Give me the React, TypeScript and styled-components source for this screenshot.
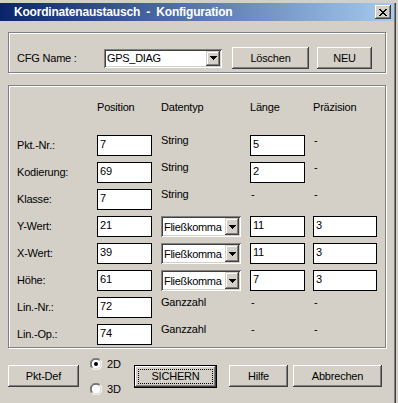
import React from 'react';
import styled, { createGlobalStyle, css } from 'styled-components';

const GlobalStyle = createGlobalStyle`
  html, body {
    margin: 0;
    padding: 0;
    background: #d4d0c8;
  }
  body {
    font-family: "Liberation Sans", Arial, sans-serif;
    font-size: 11px;
    letter-spacing: -0.2px;
    color: #000;
  }
  * {
    box-sizing: border-box;
  }
`;

const raised = css`
  background: #d4d0c8;
  box-shadow: inset -1px -1px #404040, inset 1px 1px #fff, inset -2px -2px #808080, inset 2px 2px #d4d0c8;
`;

const sunken = css`
  box-shadow: inset 1px 1px #808080, inset -1px -1px #fff, inset 2px 2px #404040, inset -2px -2px #d4d0c8;
`;

const Screen = styled.div`
  width: 398px;
  height: 403px;
  overflow: hidden;
  padding-top: 3px;
  background: #d4d0c8;
`;

const Window = styled.div`
  width: 395px;
  height: 400px;
  border-right: 1px solid #808080;
  box-shadow: 1px 0 0 #404040;
`;

const TitleBar = styled.div`
  height: 18px;
  display: flex;
  align-items: center;
  padding: 0 3px 0 14px;
  background: linear-gradient(to right, #0a246a, #a6caf0);
`;

const TitleText = styled.span`
  color: #fff;
  font-weight: bold;
  font-size: 12px;
  letter-spacing: -0.2px;
  white-space: pre;
`;

const CloseButton = styled.div`
  ${raised};
  margin-left: auto;
  width: 16px;
  height: 14px;
  display: flex;
  align-items: center;
  justify-content: center;
`;

const Body = styled.div`
  padding: 11px 8px 0 8px;
`;

const Group = styled.div<{ $height: number }>`
  height: ${p => p.$height}px;
  border: 1px solid #808080;
  box-shadow: 1px 1px 0 #fff, inset 1px 1px 0 #fff;
`;

const NameGroup = styled(Group)`
  display: flex;
  align-items: flex-start;
  padding: 14px 0 0 8px;
`;

const NameRow = styled.div`
  height: 22px;
  display: flex;
  align-items: center;
`;

const NameLabel = styled.div`
  width: 87px;
`;

const FieldGroup = styled(Group)`
  margin-top: 12px;
  padding: 15px 0 0 8px;
`;

const columns = css`
  display: grid;
  grid-template-columns: 80px 64px 89px 63px 64px;
`;

const HeaderRow = styled.div`
  ${columns};
  height: 13px;
  line-height: 13px;
  margin-bottom: 21px;
`;

const FieldGrid = styled.div`
  ${columns};
  grid-auto-rows: 21px;
  row-gap: 6px;
`;

const Label = styled.div`
  align-self: center;
  line-height: 13px;
`;

const StaticText = styled.div<{ $indent?: number }>`
  align-self: start;
  margin-top: -1px;
  line-height: 13px;
  padding-left: ${p => p.$indent ?? 0}px;
`;

const Field = styled.div<{ $width: number }>`
  width: ${p => p.$width}px;
  height: 21px;
  border: 1px solid #000;
  background: #fff;
  padding: 2px 0 0 2px;
  line-height: 13px;
`;

const Combo = styled.div<{ $width: number; $height: number }>`
  ${sunken};
  width: ${p => p.$width}px;
  height: ${p => p.$height}px;
  background: #fff;
  display: flex;
  align-items: center;
  padding: 2px 2px 2px 3px;
`;

const ComboText = styled.span`
  flex: 1;
  white-space: nowrap;
  overflow: hidden;
  letter-spacing: -0.3px;
`;

const ComboButton = styled.div`
  flex: none;
  background: #d4d0c8;
  box-shadow: inset -1px -1px #404040, inset 1px 1px #d4d0c8, inset -2px -2px #808080, inset 2px 2px #fff;
  width: 14px;
  height: 100%;
  display: flex;
  align-items: center;
  justify-content: center;
`;

const Button = styled.div<{ $width: number; $gap?: number }>`
  ${raised};
  width: ${p => p.$width}px;
  height: 22px;
  margin-left: ${p => p.$gap ?? 0}px;
  display: flex;
  align-items: center;
  justify-content: center;
`;

const DefaultButton = styled.div`
  width: 83px;
  height: 23px;
  border: 1px solid #000;
  display: flex;
`;

const DefaultFace = styled.div`
  ${raised};
  flex: 1;
  padding: 3px;
  display: flex;
`;

const FocusRing = styled.div`
  flex: 1;
  border: 1px dotted #000;
  display: flex;
  align-items: center;
  justify-content: center;
`;

const BottomRow = styled.div`
  margin-top: 9px;
  height: 38px;
  display: flex;
  align-items: center;
`;

const RadioColumn = styled.div`
  width: 44px;
  margin-left: 11px;
  display: flex;
  flex-direction: column;
  gap: 12px;
`;

const RadioRow = styled.div`
  height: 13px;
  display: flex;
  align-items: center;
  gap: 5px;
`;

function Arrow() {
  return (
    <svg width="7" height="4" viewBox="0 0 7 4" shapeRendering="crispEdges">
      <rect x="0" y="0" width="7" height="1" fill="#000" />
      <rect x="1" y="1" width="5" height="1" fill="#000" />
      <rect x="2" y="2" width="3" height="1" fill="#000" />
      <rect x="3" y="3" width="1" height="1" fill="#000" />
    </svg>
  );
}

function CloseGlyph() {
  return (
    <svg width="8" height="7" viewBox="0 0 8 7" shapeRendering="crispEdges">
      {[0, 1, 2, 3, 4, 5, 6].map(i => (
        <React.Fragment key={i}>
          <rect x={i} y={i} width="2" height="1" fill="#000" />
          <rect x={6 - i} y={i} width="2" height="1" fill="#000" />
        </React.Fragment>
      ))}
    </svg>
  );
}

function Radio({ checked }: { checked?: boolean }) {
  return (
    <svg width="12" height="12" viewBox="0 0 12 12">
      <circle cx="6" cy="6" r="5.5" fill="#fff" />
      <path d="M10.2 1.8 A5.5 5.5 0 0 0 1.8 10.2" fill="none" stroke="#808080" strokeWidth="1" />
      <path d="M1.8 10.2 A5.5 5.5 0 0 0 10.2 1.8" fill="none" stroke="#fff" strokeWidth="1" />
      <path d="M9.5 2.5 A4.5 4.5 0 0 0 2.5 9.5" fill="none" stroke="#404040" strokeWidth="1" />
      <path d="M2.5 9.5 A4.5 4.5 0 0 0 9.5 2.5" fill="none" stroke="#d4d0c8" strokeWidth="1" />
      {checked && <circle cx="6" cy="6" r="2" fill="#000" />}
    </svg>
  );
}

interface Row {
  label: string;
  position: string;
  type: string;
  length?: string;
  precision?: string;
}

const rows: Row[] = [
  { label: 'Pkt.-Nr.:', position: '7', type: 'String', length: '5' },
  { label: 'Kodierung:', position: '69', type: 'String', length: '2' },
  { label: 'Klasse:', position: '7', type: 'String' },
  { label: 'Y-Wert:', position: '21', type: 'Fließkomma', length: '11', precision: '3' },
  { label: 'X-Wert:', position: '39', type: 'Fließkomma', length: '11', precision: '3' },
  { label: 'Höhe:', position: '61', type: 'Fließkomma', length: '7', precision: '3' },
  { label: 'Lin.-Nr.:', position: '72', type: 'Ganzzahl' },
  { label: 'Lin.-Op.:', position: '74', type: 'Ganzzahl' },
];

export default function App() {
  return (
    <Screen>
      <GlobalStyle />
      <Window>
        <TitleBar>
          <TitleText>Koordinatenaustausch  -  Konfiguration</TitleText>
          <CloseButton>
            <CloseGlyph />
          </CloseButton>
        </TitleBar>
        <Body>
          <NameGroup $height={41}>
            <NameRow>
              <NameLabel>CFG Name :</NameLabel>
              <Combo $width={118} $height={19}>
                <ComboText>GPS_DIAG</ComboText>
                <ComboButton>
                  <Arrow />
                </ComboButton>
              </Combo>
              <Button $width={77} $gap={10}>Löschen</Button>
              <Button $width={55} $gap={8}>NEU</Button>
            </NameRow>
          </NameGroup>

          <FieldGroup $height={263}>
            <HeaderRow>
              <span />
              <span>Position</span>
              <span>Datentyp</span>
              <span>Länge</span>
              <span>Präzision</span>
            </HeaderRow>
            <FieldGrid>
              {rows.map(row => {
                const float = row.type === 'Fließkomma';
                return (
                  <React.Fragment key={row.label}>
                    <Label>{row.label}</Label>
                    <Field $width={55}>{row.position}</Field>
                    {float ? (
                      <Combo $width={80} $height={21}>
                        <ComboText>{row.type}</ComboText>
                        <ComboButton>
                          <Arrow />
                        </ComboButton>
                      </Combo>
                    ) : (
                      <StaticText>{row.type}</StaticText>
                    )}
                    {row.length ? (
                      <Field $width={55}>{row.length}</Field>
                    ) : (
                      <StaticText $indent={1}>-</StaticText>
                    )}
                    {row.precision ? (
                      <Field $width={64}>{row.precision}</Field>
                    ) : (
                      <StaticText $indent={1}>-</StaticText>
                    )}
                  </React.Fragment>
                );
              })}
            </FieldGrid>
          </FieldGroup>

          <BottomRow>
            <Button $width={71}>Pkt-Def</Button>
            <RadioColumn>
              <RadioRow>
                <Radio checked />
                <span>2D</span>
              </RadioRow>
              <RadioRow>
                <Radio />
                <span>3D</span>
              </RadioRow>
            </RadioColumn>
            <DefaultButton>
              <DefaultFace>
                <FocusRing>SICHERN</FocusRing>
              </DefaultFace>
            </DefaultButton>
            <Button $width={59} $gap={12}>Hilfe</Button>
            <Button $width={89} $gap={5}>Abbrechen</Button>
          </BottomRow>
        </Body>
      </Window>
    </Screen>
  );
}
